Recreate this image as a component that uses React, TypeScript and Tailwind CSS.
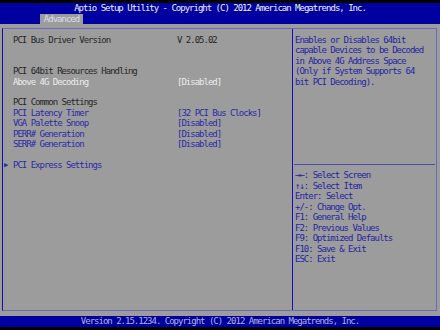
const grey = 'bg-[#9c9c9c]';

type Row = { label?: string; value?: string; kind?: 'dark' | 'sel' | 'link'; sub?: boolean };

const rows: Row[] = [
  { label: 'PCI Bus Driver Version', value: 'V 2.05.02', kind: 'dark' },
  {},
  {},
  { label: 'PCI 64bit Resources Handling', kind: 'dark' },
  { label: 'Above 4G Decoding', value: '[Disabled]', kind: 'sel' },
  {},
  { label: 'PCI Common Settings', kind: 'dark' },
  { label: 'PCI Latency Timer', value: '[32 PCI Bus Clocks]', kind: 'link' },
  { label: 'VGA Palette Snoop', value: '[Disabled]', kind: 'link' },
  { label: 'PERR# Generation', value: '[Disabled]', kind: 'link' },
  { label: 'SERR# Generation', value: '[Disabled]', kind: 'link' },
  {},
  { label: 'PCI Express Settings', kind: 'link', sub: true },
];

const help = [
  'Enables or Disables 64bit',
  'capable Devices to be Decoded',
  'in Above 4G Address Space',
  '(Only if System Supports 64',
  'bit PCI Decoding).',
];

const keys = [
  '→←: Select Screen',
  '↑↓: Select Item',
  'Enter: Select',
  '+/-: Change Opt.',
  'F1: General Help',
  'F2: Previous Values',
  'F9: Optimized Defaults',
  'F10: Save & Exit',
  'ESC: Exit',
];

const color = (k?: Row['kind']) =>
  k === 'sel' ? 'text-[#ececec]' : k === 'link' ? 'text-[#2a2aa8]' : 'text-[#262626]';

export default function App() {
  return (
    <div
      className="w-[440px] h-[330px] bg-black overflow-hidden text-[9px] tracking-[-1px] whitespace-pre"
      style={{ fontFamily: '"DejaVu Sans Mono", "Liberation Mono", monospace' }}
    >
      <div className="h-[3px]" />
      <div className="h-[21px] bg-[#0000a0] flex flex-col">
        <div className="h-[11px] leading-[11px] text-center text-[#f0f0f0]">
          Aptio Setup Utility - Copyright (C) 2012 American Megatrends, Inc.
        </div>
        <div className={`h-[10px] w-[43px] ml-[40px] ${grey} leading-[10px] text-center text-[#dcdcf0]`}>
          Advanced
        </div>
      </div>
      <div className={`h-[292px] ${grey} pt-[4px] pb-[5px] pl-[2px] pr-[3px]`}>
        <div className="flex h-full border-t border-b border-r border-[#6a6ab6] border-l border-l-[#1010a8]">
          <div className="w-[289px] pt-[6px] pl-[10px] leading-[10.42px] relative">
            {rows.map((r, i) => (
              <div key={i} className={`h-[10.42px] flex ${color(r.kind)}`}>
                {r.sub && (
                  <span className="absolute left-[1px] text-[7px] text-[#2a2aa8]">▶</span>
                )}
                <span className="w-[164px]">{r.label ?? ''}</span>
                <span>{r.value ?? ''}</span>
              </div>
            ))}
          </div>
          <div className="flex-1 border-l border-[#1010c0] flex flex-col text-[#2424a4]">
            <div className="h-[135px] pt-[6px] pl-[2px] leading-[10.42px]">
              {help.map((t, i) => (
                <div key={i} className="h-[10.42px]">{t}</div>
              ))}
            </div>
            <div className="h-px mx-[1px] bg-[#4c4cb4]" />
            <div className="pt-[5px] pl-[2px] leading-[10.5px]">
              {keys.map((t, i) => (
                <div key={i} className="h-[10.5px]">{t}</div>
              ))}
            </div>
          </div>
        </div>
      </div>
      <div className="h-[11px] bg-[#0000a0] leading-[11px] text-center text-[#b4b4d8]">
        Version 2.15.1234. Copyright (C) 2012 American Megatrends, Inc.
      </div>
    </div>
  );
}
